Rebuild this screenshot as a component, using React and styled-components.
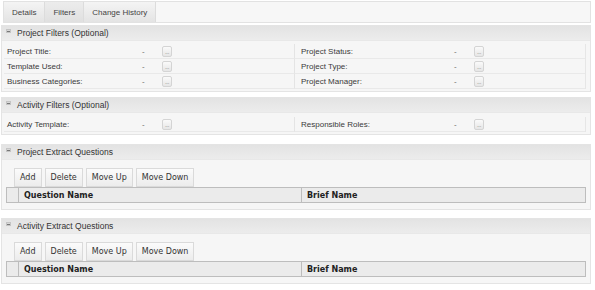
import React from "react";
import styled, { createGlobalStyle } from "styled-components";

const Global = createGlobalStyle`
  html, body { margin: 0; padding: 0; background: #fff; }
  body { font-family: "Liberation Sans", Arial, sans-serif; font-size: 8px; color: #333; }
`;

const Page = styled.div`
  width: 595px;
  padding: 0 4px 0 1px;
  box-sizing: border-box;
`;

const TabStrip = styled.div`
  display: flex;
  height: 20px;
  margin: 1px 0 2px 2px;
  border: 1px solid #e2e2e2;
  background: #f7f7f7;
`;

const Tab = styled.div`
  display: flex;
  align-items: center;
  padding: 0 8px;
  border-right: 1px solid #dcdcdc;
  background: ${(p) =>
    p.$active
      ? "linear-gradient(#ececec, #e0e0e0)"
      : "linear-gradient(#f4f4f4, #e4e4e4)"};
  color: #444;
`;

const Section = styled.div`
  border: 1px solid #e4e4e4;
  background: #f6f6f6;
  margin-bottom: ${(p) => p.$gap}px;
`;

const Header = styled.div`
  display: flex;
  align-items: center;
  height: 14px;
  padding-left: 4px;
  gap: 6px;
  background: linear-gradient(#e3e3e3, #ececec);
  border-bottom: 1px solid #e8e8e8;
  color: #333;
  font-size: 8.5px;
`;

const Collapse = styled.span`
  display: inline-block;
  width: 5px;
  height: 4px;
  margin-top: -5px;
  background: #d8d8d8;
  border: 1px solid #c4c4c4;
  box-sizing: border-box;
  position: relative;
  &::after {
    content: "";
    position: absolute;
    left: 0;
    right: 0;
    top: 1px;
    height: 1px;
    background: #777;
  }
`;

const FilterBody = styled.div`
  padding: ${(p) => p.$pad || "3px 4px 2px 2px"};
`;

const Grid = styled.div`
  display: grid;
  grid-template-columns: 290px 1fr;
  border-right: 1px solid #e6e6e6;
`;

const Cell = styled.div`
  display: flex;
  align-items: center;
  height: 14px;
  border-bottom: 1px solid #e9e9e9;
  border-left: ${(p) => (p.$right ? "1px solid #e4e4e4" : "none")};
  padding-left: ${(p) => (p.$right ? "6px" : "3px")};
`;

const Label = styled.span`
  width: ${(p) => p.$w}px;
  color: #3a3a3a;
`;

const Dash = styled.span`
  width: 20px;
  color: #666;
`;

const PickBtn = styled.span`
  display: inline-flex;
  align-items: flex-end;
  justify-content: center;
  width: 10px;
  height: 11px;
  box-sizing: border-box;
  padding-bottom: 2px;
  border: 1px solid #d4d4d4;
  border-radius: 2px;
  background: linear-gradient(#fafafa, #e6e6e6);
  font-family: "Liberation Sans", sans-serif;
  font-size: 6px;
  line-height: 3px;
  letter-spacing: -0.3px;
  color: #777;
`;

const QBody = styled.div`
  padding: 8px 4px 6px 4px;
`;

const Toolbar = styled.div`
  display: flex;
  gap: 3px;
  padding-left: 8px;
`;

const ToolBtn = styled.div`
  display: flex;
  align-items: center;
  height: 17px;
  padding: 0 5px;
  border: 1px solid #dadada;
  background: linear-gradient(#fbfbfb, #ececec);
  font-family: "DejaVu Sans", Verdana, sans-serif;
  font-size: 8px;
  color: #333;
`;

const Table = styled.div`
  display: grid;
  grid-template-columns: 11px 283px 1fr;
  height: 14px;
  border: 1px solid #bdbdbd;
  background: #ebebeb;
`;

const Th = styled.div`
  display: flex;
  align-items: center;
  padding-left: ${(p) => (p.$pad ? "5px" : "0")};
  border-left: ${(p) => (p.$first ? "none" : "1px solid #bdbdbd")};
  font-family: "DejaVu Sans", Verdana, sans-serif;
  font-weight: bold;
  font-size: 8px;
  color: #222;
`;

const FilterRow = ({ l, r }) => (
  <>
    <Cell>
      <Label $w={135}>{l}</Label>
      <Dash>-</Dash>
      <PickBtn>...</PickBtn>
    </Cell>
    <Cell $right>
      <Label $w={153}>{r}</Label>
      <Dash>-</Dash>
      <PickBtn>...</PickBtn>
    </Cell>
  </>
);

const QuestionSection = ({ title, gap }) => (
  <Section $gap={gap}>
    <Header>
      <Collapse />
      {title}
    </Header>
    <QBody>
      <Toolbar>
        <ToolBtn>Add</ToolBtn>
        <ToolBtn>Delete</ToolBtn>
        <ToolBtn>Move Up</ToolBtn>
        <ToolBtn>Move Down</ToolBtn>
      </Toolbar>
      <Table>
        <Th $first />
        <Th $pad>Question Name</Th>
        <Th $pad>Brief Name</Th>
      </Table>
    </QBody>
  </Section>
);

export default function App() {
  return (
    <Page>
      <Global />
      <TabStrip>
        <Tab>Details</Tab>
        <Tab $active>Filters</Tab>
        <Tab>Change History</Tab>
      </TabStrip>
      <Section $gap={5}>
        <Header>
          <Collapse />
          Project Filters (Optional)
        </Header>
        <FilterBody>
          <Grid>
            <FilterRow l="Project Title:" r="Project Status:" />
            <FilterRow l="Template Used:" r="Project Type:" />
            <FilterRow l="Business Categories:" r="Project Manager:" />
          </Grid>
        </FilterBody>
      </Section>
      <Section $gap={9}>
        <Header>
          <Collapse />
          Activity Filters (Optional)
        </Header>
        <FilterBody $pad="4px 4px 2px 2px">
          <Grid>
            <FilterRow l="Activity Template:" r="Responsible Roles:" />
          </Grid>
        </FilterBody>
      </Section>
      <QuestionSection title="Project Extract Questions" gap={8} />
      <QuestionSection title="Activity  Extract Questions" gap={0} />
    </Page>
  );
}
